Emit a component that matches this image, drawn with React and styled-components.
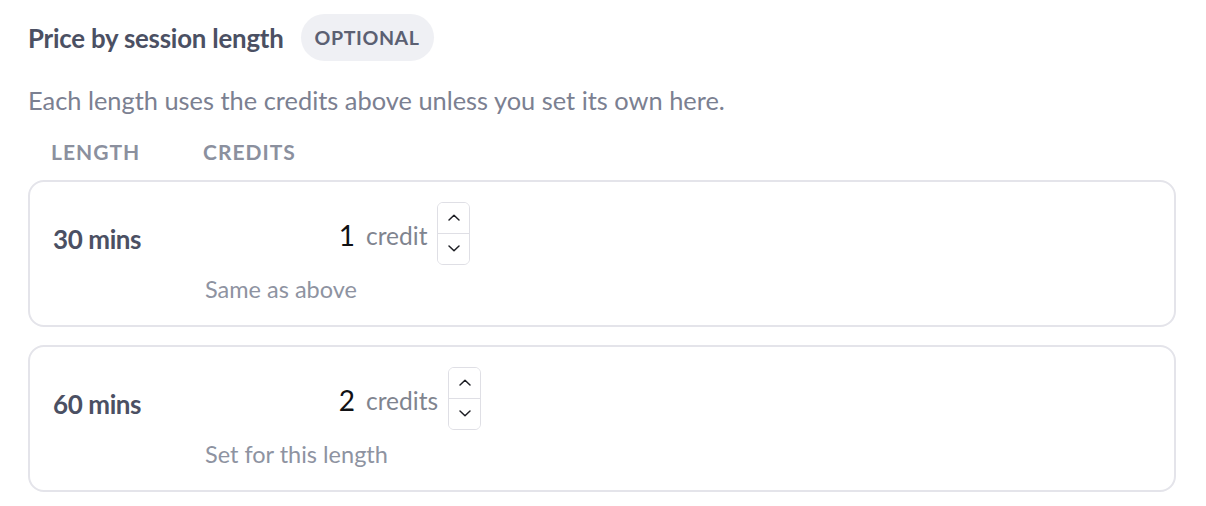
import styled, { createGlobalStyle } from "styled-components";

const GlobalStyle = createGlobalStyle`
  body {
    margin: 0;
    background: #ffffff;
    font-family: Lato, "Noto Sans", sans-serif;
  }
`;

const Section = styled.section`
  width: 1148px;
  padding: 14px 0 0 28px;
`;

const TitleRow = styled.div`
  display: flex;
  align-items: center;
  gap: 17px;
`;

const Title = styled.h2`
  margin: 0;
  font-size: 25.8px;
  font-weight: 700;
  color: #4b5063;
  letter-spacing: -0.2px;
`;

const Badge = styled.span`
  display: inline-flex;
  align-items: center;
  height: 47px;
  padding: 0 14px;
  border-radius: 24px;
  background: #eff0f4;
  color: #5b6072;
  font-size: 19.6px;
  font-weight: 700;
  letter-spacing: 0.6px;
`;

const Description = styled.p`
  margin: 22px 0 0;
  font-size: 25.4px;
  line-height: 34px;
  color: #7b8091;
`;

const HeaderRow = styled.div`
  display: grid;
  grid-template-columns: 152px 1fr;
  padding: 0 0 0 23px;
  margin-top: 17px;
  height: 34px;
  align-items: center;
`;

const HeaderCell = styled.span`
  font-size: 21px;
  font-weight: 700;
  color: #8b909e;
  letter-spacing: 1px;
`;

const Card = styled.div`
  display: grid;
  grid-template-columns: 152px 1fr;
  grid-template-rows: 62px auto;
  align-items: center;
  margin-top: ${(p) => (p.$first ? "12px" : "18px")};
  padding: 20px 23px 19px;
  border: 2px solid #e4e4ea;
  border-radius: 16px;
  box-sizing: border-box;
  height: 147px;
`;

const LengthLabel = styled.span`
  font-size: 26px;
  font-weight: 700;
  color: #4b5063;
  letter-spacing: -0.4px;
  padding-top: 12px;
`;

const CreditsField = styled.div`
  display: flex;
  align-items: center;
`;

const NumberValue = styled.span`
  width: 150px;
  text-align: right;
  font-size: 28px;
  color: #111114;
  padding-top: 4px;
`;

const Unit = styled.span`
  margin-left: 11px;
  font-size: 24.5px;
  color: #80848f;
  padding-top: 4px;
`;

const Spinner = styled.div`
  display: flex;
  flex-direction: column;
  margin-left: 10px;
  width: 33px;
  height: 63px;
  border: 1.5px solid #dfdfe5;
  border-radius: 6px;
  box-sizing: border-box;
  overflow: hidden;
`;

const SpinButton = styled.button`
  flex: 1;
  display: flex;
  align-items: center;
  justify-content: center;
  padding: 0;
  border: 0;
  background: #ffffff;
  border-top: ${(p) => (p.$down ? "1.5px solid #dfdfe5" : "0")};
  color: #1e1f25;
`;

const Hint = styled.span`
  grid-column: 2;
  font-size: 23.5px;
  line-height: 30px;
  color: #8e93a1;
  padding-top: 8px;
`;

const Chevron = ({ up }) => (
  <svg width="14" height="9" viewBox="0 0 14 9" fill="none">
    <path
      d={up ? "M2 7 L7 2.2 L12 7" : "M2 2 L7 6.8 L12 2"}
      stroke="currentColor"
      strokeWidth="1.5"
      strokeLinecap="round"
      strokeLinejoin="round"
    />
  </svg>
);

const rows = [
  { length: "30 mins", value: 1, unit: "credit", hint: "Same as above" },
  { length: "60 mins", value: 2, unit: "credits", hint: "Set for this length" },
];

export default function App() {
  return (
    <>
      <GlobalStyle />
      <Section>
        <TitleRow>
          <Title>Price by session length</Title>
          <Badge>OPTIONAL</Badge>
        </TitleRow>
        <Description>
          Each length uses the credits above unless you set its own here.
        </Description>
        <HeaderRow>
          <HeaderCell>LENGTH</HeaderCell>
          <HeaderCell>CREDITS</HeaderCell>
        </HeaderRow>
        {rows.map((row, index) => (
          <Card key={row.length} $first={index === 0}>
            <LengthLabel>{row.length}</LengthLabel>
            <CreditsField>
              <NumberValue>{row.value}</NumberValue>
              <Unit>{row.unit}</Unit>
              <Spinner>
                <SpinButton aria-label="Increase">
                  <Chevron up />
                </SpinButton>
                <SpinButton $down aria-label="Decrease">
                  <Chevron />
                </SpinButton>
              </Spinner>
            </CreditsField>
            <Hint>{row.hint}</Hint>
          </Card>
        ))}
      </Section>
    </>
  );
}
